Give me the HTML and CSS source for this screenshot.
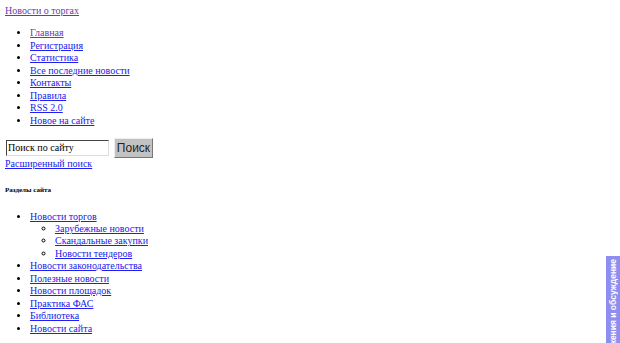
FILE: index.html
```html
<!DOCTYPE html>
<html lang="ru">
<head>
<meta charset="utf-8">
<title>Новости о торгах</title>
<link rel="stylesheet" href="styles.css">
</head>
<body>
<a class="site visited" href="#">Новости о торгах</a>
<ul class="menu">
  <li><a class="visited" href="#">Главная</a></li>
  <li><a href="#">Регистрация</a></li>
  <li><a href="#">Статистика</a></li>
  <li><a href="#">Все последние новости</a></li>
  <li><a href="#">Контакты</a></li>
  <li><a href="#">Правила</a></li>
  <li><a href="#">RSS 2.0</a></li>
  <li><a href="#">Новое на сайте</a></li>
</ul>
<form class="search">
  <input class="search-input" type="text" value="Поиск по сайту">
  <button class="search-btn" type="button">Поиск</button>
</form>
<a class="adv" href="#">Расширенный поиск</a>
<h5 class="sections-title">Разделы сайта</h5>
<ul class="menu">
  <li><a href="#">Новости торгов</a>
    <ul class="sub">
      <li><a href="#">Зарубежные новости</a></li>
      <li><a href="#">Скандальные закупки</a></li>
      <li><a href="#">Новости тендеров</a></li>
    </ul>
  </li>
  <li><a href="#">Новости законодательства</a></li>
  <li><a href="#">Полезные новости</a></li>
  <li><a href="#">Новости площадок</a></li>
  <li><a href="#">Практика ФАС</a></li>
  <li><a href="#">Библиотека</a></li>
  <li><a href="#">Новости сайта</a></li>
</ul>
<div class="feedback"><span class="feedback-text">Предложения и обсуждение</span></div>
</body>
</html>
```
FILE: styles.css
```css
html, body {
  overflow: hidden;
}
body {
  margin: 5px;
  font-family: "Liberation Serif", "Times New Roman", serif;
  font-size: 10px;
  line-height: 12.45px;
  color: #000;
  background: #fff;
}
a {
  color: #2020ee;
}
a.visited {
  color: #6a3cab;
}
.site {
  display: inline-block;
}
.menu {
  margin: 10px 0;
  padding-left: 25px;
  list-style: disc;
}
.sub {
  margin: 0;
  padding-left: 25px;
  list-style: circle;
}
.search {
  display: flex;
  align-items: center;
  gap: 5px;
  margin: 0 0 0 1px;
  height: 21px;
}
.search-input {
  box-sizing: border-box;
  width: 103px;
  height: 16px;
  margin: 0;
  padding: 0 1px;
  border: 1px solid #444;
  border-right-color: #ddd;
  border-bottom-color: #ddd;
  font-family: "Liberation Serif", serif;
  font-size: 10px;
  color: #000;
  background: #fff;
}
.search-btn {
  box-sizing: border-box;
  width: 39px;
  height: 20px;
  margin: 0;
  padding: 0;
  border: 1px solid #777;
  border-top-color: #eee;
  border-left-color: #eee;
  background: #c2c2c2;
  font-family: "Liberation Sans", Arial, sans-serif;
  font-size: 12px;
  font-weight: normal;
  color: #222;
}
.adv {
  display: inline-block;
}
.sections-title {
  margin: 15px 0 17px;
  font-size: 7px;
  line-height: 8px;
  font-weight: bold;
}
.feedback {
  position: fixed;
  right: 0;
  top: 256px;
  width: 14px;
  height: 140px;
  background: #8e8ef0;
  overflow: hidden;
}
.feedback-text {
  position: absolute;
  left: 1px;
  top: 3px;
  writing-mode: vertical-rl;
  transform: rotate(180deg);
  font-family: "Liberation Sans", Arial, sans-serif;
  font-size: 8.5px;
  line-height: 12px;
  font-weight: bold;
  color: #fff;
  white-space: nowrap;
}
```
